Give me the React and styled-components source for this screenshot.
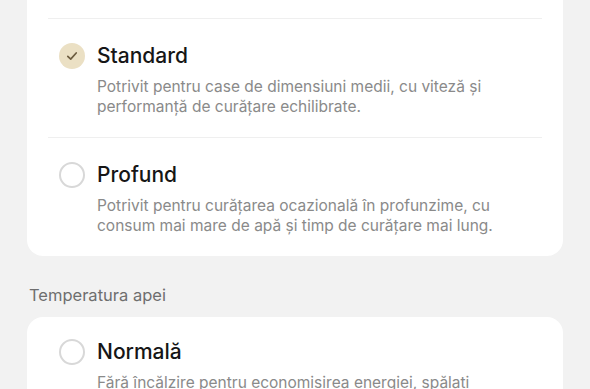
import React from "react";
import styled, { createGlobalStyle } from "styled-components";

const GlobalStyle = createGlobalStyle`
  html, body {
    margin: 0;
    padding: 0;
    background: #f2f2f2;
    font-family: "Inter", "Roboto", "Noto Sans", sans-serif;
    -webkit-font-smoothing: antialiased;
  }
`;

const Page = styled.div`
  padding: 0 27px;
  display: flex;
  flex-direction: column;
`;

// "continued" = the card starts above the visible area, so its top is flat
const Card = styled.div`
  background: #ffffff;
  border-radius: ${(p) => (p.continued ? "0 0 16px 16px" : "16px")};
  padding: ${(p) => (p.continued ? "18px 21px 0" : "0 21px")};
  display: flex;
  flex-direction: column;
`;

const Divider = styled.div`
  height: 1px;
  background: #efefef;
`;

const Row = styled.div`
  display: flex;
  align-items: flex-start;
  gap: 12px;
  padding: 23px 11px 20px;

  &:first-child {
    padding-top: 21px;
  }
`;

const Radio = styled.div`
  flex: none;
  margin-top: 1px;
  width: 26px;
  height: 26px;
  box-sizing: border-box;
  border-radius: 50%;
  display: flex;
  align-items: center;
  justify-content: center;
  background: ${(p) => (p.checked ? "#ebe0c4" : "transparent")};
  border: ${(p) => (p.checked ? "none" : "2px solid #d8d8d8")};
`;

const Texts = styled.div`
  display: flex;
  flex-direction: column;
  gap: 7px;
`;

const Title = styled.div`
  font-size: 21px;
  line-height: 28px;
  color: #161616;
  font-weight: 500;
`;

const Desc = styled.div`
  font-size: 15.5px;
  line-height: 20px;
  color: #8a8a8a;
`;

const SectionLabel = styled.div`
  font-size: 16.5px;
  line-height: 22px;
  color: #6e6e6e;
  padding: 28px 2px 11px;
`;

const Check = () => (
  <svg width="14" height="14" viewBox="0 0 14 14" fill="none">
    <path
      d="M2.8 7.3 L5.7 10.1 L11.2 4"
      stroke="#6d5d40"
      strokeWidth="1.7"
      strokeLinecap="round"
      strokeLinejoin="round"
    />
  </svg>
);

const Option = ({ title, desc, checked }) => (
  <Row>
    <Radio checked={checked}>{checked && <Check />}</Radio>
    <Texts>
      <Title>{title}</Title>
      <Desc>{desc}</Desc>
    </Texts>
  </Row>
);

const modes = [
  {
    title: "Standard",
    desc: "Potrivit pentru case de dimensiuni medii, cu viteză și performanță de curățare echilibrate.",
    checked: true,
  },
  {
    title: "Profund",
    desc: "Potrivit pentru curățarea ocazională în profunzime, cu consum mai mare de apă și timp de curățare mai lung.",
  },
];

const temps = [
  {
    title: "Normală",
    desc: "Fără încălzire pentru economisirea energiei, spălati mopurile cu apă la temperatura camerei.",
  },
];

const OptionList = ({ items, continued }) => (
  <Card continued={continued}>
    {items.map((it, i) => (
      <React.Fragment key={it.title}>
        {(i > 0 || continued) && <Divider />}
        <Option {...it} />
      </React.Fragment>
    ))}
  </Card>
);

export default function App() {
  return (
    <>
      <GlobalStyle />
      <Page>
        <OptionList items={modes} continued />
        <SectionLabel>Temperatura apei</SectionLabel>
        <OptionList items={temps} />
      </Page>
    </>
  );
}
